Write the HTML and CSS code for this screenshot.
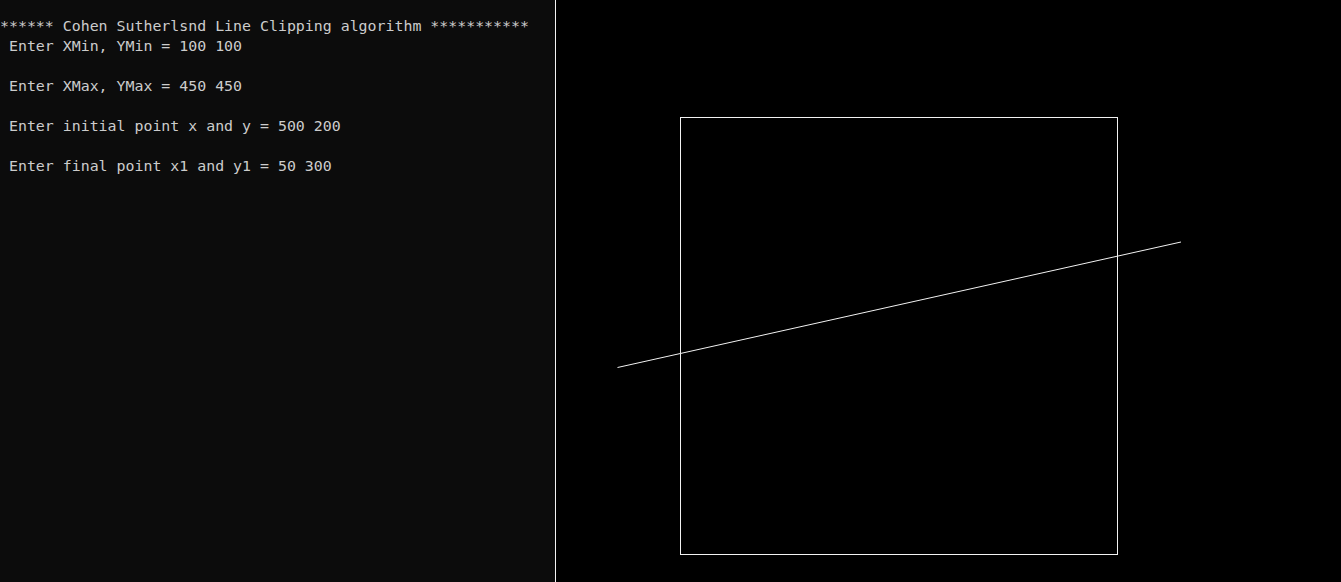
FILE: index.html
```html
<!DOCTYPE html>
<html>
<head>
<meta charset="utf-8">
<link rel="stylesheet" href="styles.css">
</head>
<body>
<div class="screen">
  <div class="console">
<pre class="output">****** Cohen Sutherlsnd Line Clipping algorithm ***********
 Enter XMin, YMin = 100 100

 Enter XMax, YMax = 450 450

 Enter initial point x and y = 500 200

 Enter final point x1 and y1 = 50 300</pre>
  </div>
  <div class="divider"></div>
  <div class="graphics">
    <svg class="canvas" width="785" height="582" viewBox="0 0 785 582">
      <rect x="124.5" y="117.5" width="437" height="437" fill="none" stroke="#f2f2f2" stroke-width="1" shape-rendering="crispEdges"/>
      <line x1="61.5" y1="367.5" x2="625" y2="242" stroke="#f2f2f2" stroke-width="1"/>
    </svg>
  </div>
</div>
</body>
</html>
```

FILE: styles.css
```css
html, body {
  margin: 0;
  padding: 0;
  background: #000;
  overflow: hidden;
}
.screen {
  display: flex;
  width: 1341px;
  height: 582px;
}
.console {
  width: 555px;
  height: 582px;
  background: #0c0c0c;
  flex: none;
  overflow: hidden;
}
.output {
  margin: 0;
  padding: 16px 0 0 0;
  font-family: "DejaVu Sans Mono", "Liberation Mono", monospace;
  font-size: 14.9px;
  line-height: 20px;
  color: #cccccc;
  white-space: pre;
}
.divider {
  width: 1px;
  flex: none;
  background: #f4f4f4;
}
.graphics {
  flex: 1;
  background: #000;
  overflow: hidden;
}
.canvas {
  display: block;
}
```
